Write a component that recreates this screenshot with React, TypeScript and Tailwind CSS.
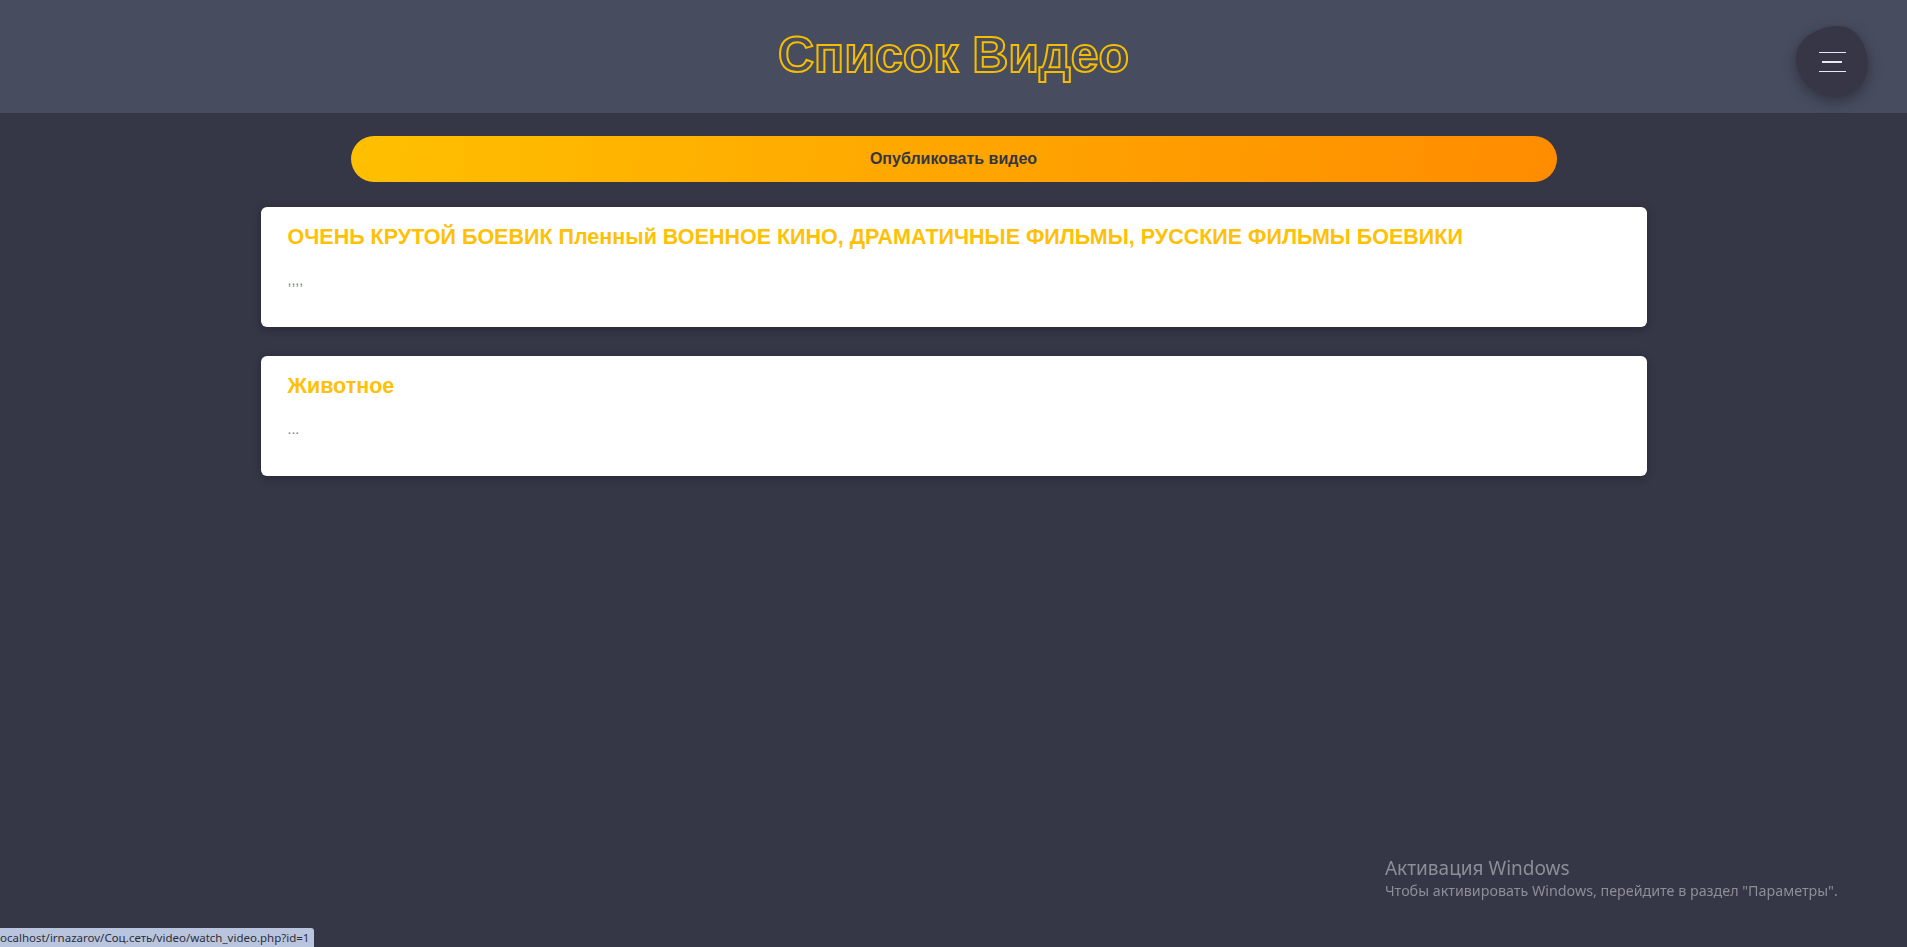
const videos = [
  {
    title: "ОЧЕНЬ КРУТОЙ БОЕВИК Пленный ВОЕННОЕ КИНО, ДРАМАТИЧНЫЕ ФИЛЬМЫ, РУССКИЕ ФИЛЬМЫ БОЕВИКИ",
    description: ",,,,",
  },
  { title: "Животное", description: "..." },
];

const App = () => {
  return (
    <div className="min-h-screen w-full bg-[#353646] font-['Liberation_Sans',Arial,sans-serif]">
      <header className="relative w-full h-[113px] bg-[#474c5f] flex items-center justify-center">
        <h1 className="text-[50px] font-bold leading-none text-transparent [-webkit-text-stroke:2px_#f5bd00] pb-[4px]">
          Список Видео
        </h1>
        <button className="absolute right-[39px] top-[26px] w-[72px] h-[71px] bg-[#363646] rounded-[60%_40%_45%_55%/45%_55%_45%_55%] shadow-[0_4px_14px_rgba(0,0,0,0.35)] flex flex-col items-center justify-center gap-[8px]">
          <span className="block w-[27px] h-px bg-[#e8e8ee]" />
          <span className="block w-[20px] h-[2px] bg-[#e8e8ee]" />
          <span className="block w-[27px] h-px bg-[#e8e8ee]" />
        </button>
      </header>

      <main className="flex flex-col items-center pt-[23px]">
        <button className="w-[1206px] h-[46px] rounded-full bg-[linear-gradient(100deg,#ffc000,#ff8c00)] text-[#333645] text-[16px] font-bold">
          Опубликовать видео
        </button>

        <div className="w-[1386px] mt-[25px] flex flex-col gap-[29px]">
          {videos.map((v) => (
            <div
              key={v.title}
              className="h-[120px] bg-white rounded-[6px] shadow-[0_2px_8px_rgba(0,0,0,0.25)] px-[27px] pt-[18px]"
            >
              <h3 className="text-[21.5px] leading-[24px] font-bold text-[#ffc107]">{v.title}</h3>
              <p className="mt-[23px] text-[14px] leading-[16px] text-[#6c7a92]">{v.description}</p>
            </div>
          ))}
        </div>
      </main>

      <div className="fixed left-[1385px] top-[856px] text-[#8c8e98] font-['Noto_Sans',sans-serif] pointer-events-none">
        <div className="text-[19px] leading-[24px]">Активация Windows</div>
        <div className="text-[14.3px] leading-[20px] mt-[1px]">
          Чтобы активировать Windows, перейдите в раздел "Параметры".
        </div>
      </div>

      <div className="fixed left-0 bottom-0 h-[19px] pr-[5px] bg-[#b9c5df] rounded-tr-[3px] text-[11.5px] leading-[19px] text-[#2e2e36] font-['Noto_Sans',sans-serif] overflow-hidden">
        ocalhost/irnazarov/Соц.сеть/video/watch_video.php?id=1
      </div>
    </div>
  );
};

export default App;
